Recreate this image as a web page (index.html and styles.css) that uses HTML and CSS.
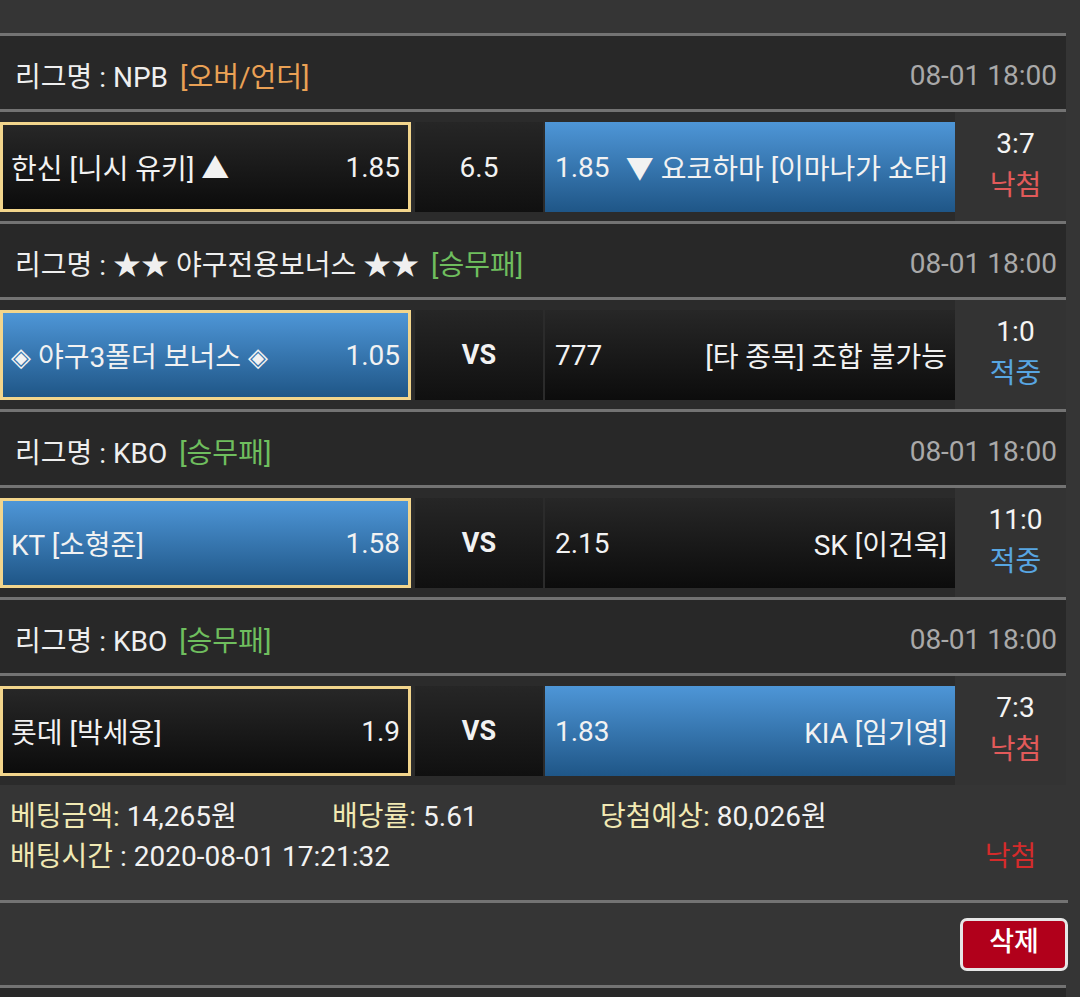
FILE: index.html
```html
<!DOCTYPE html>
<html lang="ko">
<head>
<meta charset="utf-8">
<title>베팅내역</title>
<link rel="stylesheet" href="styles.css">
</head>
<body>
<div class="page">
  <div class="top-space"></div>
  <div class="card">
    <div class="league">
      <div class="league-name">리그명 : NPB <span class="tag tag-ou">[오버/언더]</span></div>
      <div class="league-date">08-01 18:00</div>
    </div>
    <div class="game">
      <div class="pick dark selected"><span>한신 [니시 유키] ▲</span><span>1.85</span></div>
      <div class="mid">6.5</div>
      <div class="pick blue"><span>1.85</span><span>▼ 요코하마 [이마나가 쇼타]</span></div>
      <div class="result"><span class="score">3:7</span><span class="lose">낙첨</span></div>
    </div>

    <div class="league">
      <div class="league-name">리그명 : ★★ 야구전용보너스 ★★ <span class="tag tag-wdl">[승무패]</span></div>
      <div class="league-date">08-01 18:00</div>
    </div>
    <div class="game">
      <div class="pick blue selected"><span><span class="dia">◈</span> 야구3폴더 보너스 <span class="dia">◈</span></span><span>1.05</span></div>
      <div class="mid vs">VS</div>
      <div class="pick dark"><span>777</span><span>[타 종목] 조합 불가능</span></div>
      <div class="result"><span class="score">1:0</span><span class="win">적중</span></div>
    </div>

    <div class="league">
      <div class="league-name">리그명 : KBO <span class="tag tag-wdl">[승무패]</span></div>
      <div class="league-date">08-01 18:00</div>
    </div>
    <div class="game">
      <div class="pick blue selected"><span>KT [소형준]</span><span>1.58</span></div>
      <div class="mid vs">VS</div>
      <div class="pick dark"><span>2.15</span><span>SK [이건욱]</span></div>
      <div class="result"><span class="score">11:0</span><span class="win">적중</span></div>
    </div>

    <div class="league">
      <div class="league-name">리그명 : KBO <span class="tag tag-wdl">[승무패]</span></div>
      <div class="league-date">08-01 18:00</div>
    </div>
    <div class="game">
      <div class="pick dark selected"><span>롯데 [박세웅]</span><span>1.9</span></div>
      <div class="mid vs">VS</div>
      <div class="pick blue"><span>1.83</span><span>KIA [임기영]</span></div>
      <div class="result"><span class="score">7:3</span><span class="lose">낙첨</span></div>
    </div>

    <div class="info">
      <div class="info-row">
        <div class="info-item"><span class="label">베팅금액:</span> 14,265원</div>
        <div class="info-item"><span class="label">배당률:</span> 5.61</div>
        <div class="info-item"><span class="label">당첨예상:</span> 80,026원</div>
      </div>
      <div class="info-row info-row2">
        <div class="info-time"><span class="label">배팅시간</span> : 2020-08-01 17:21:32</div>
        <div class="info-status">낙첨</div>
      </div>
    </div>

    <div class="actions">
      <button class="btn-delete" type="button">삭제</button>
    </div>
    <div class="next-card"></div>
  </div>
</div>
</body>
</html>
```

FILE: styles.css
```css
html, body {
  margin: 0;
  padding: 0;
  background: #353535;
}

body {
  font-family: Roboto, "Noto Sans CJK KR", "DejaVu Sans", sans-serif;
  font-size: 28px;
  color: #f2f2f2;
}

.page {
  width: 1080px;
  height: 997px;
  overflow: hidden;
}

.top-space {
  height: 33px;
}

.card {
  width: 1066px;
}

.league {
  border-top: 3px solid #737373;
  background: #282828;
  display: flex;
  align-items: center;
  justify-content: space-between;
  padding: 5px 9px 0 15px;
  box-sizing: border-box;
  height: 76px;
}

.league-name {
  color: #efefef;
  white-space: nowrap;
}

.tag {
  margin-left: 5px;
}

.tag-ou {
  color: #eaa155;
}

.tag-wdl {
  color: #6fbe5e;
}

.league-date {
  color: #a9a9a9;
}

.game {
  border-top: 3px solid #737373;
  background: #2b2b2b;
  display: flex;
  height: 112px;
  box-sizing: border-box;
  padding-top: 10px;
  padding-bottom: 9px;
}

.pick {
  width: 411px;
  height: 90px;
  box-sizing: border-box;
  display: flex;
  align-items: center;
  justify-content: space-between;
  padding: 0 8px 0 10px;
  white-space: nowrap;
}

.pick + .mid + .pick {
  width: 410px;
  margin-left: 2px;
}

.dark {
  background: linear-gradient(#272727, #0c0c0c);
}

.blue {
  background: linear-gradient(#4e96d7, #1f5687);
}

.selected {
  border: 3px solid #f2d58c;
  padding: 0 8px 0 8px;
}

.dia {
  font-size: 26px;
  vertical-align: 1px;
}

.mid {
  width: 128px;
  height: 90px;
  margin-left: 4px;
  display: flex;
  align-items: center;
  justify-content: center;
  background: linear-gradient(#262626, #101010);
}

.mid.vs {
  font-weight: bold;
  font-size: 27px;
}

.result {
  flex: 1;
  margin-top: -10px;
  margin-bottom: -9px;
  background: #333333;
  display: flex;
  flex-direction: column;
  align-items: center;
  justify-content: center;
  padding-left: 10px;
  padding-bottom: 4px;
  line-height: 42px;
}

.score {
  color: #f4f4f4;
}

.lose {
  color: #e25a5a;
}

.win {
  color: #58a6e2;
}

.info {
  height: 115px;
  box-sizing: border-box;
  padding: 12px 0 0 10px;
  background: #353535;
}

.info-row {
  display: grid;
  grid-template-columns: 322px 268px 1fr;
  line-height: 40px;
}

.info-row2 {
  display: flex;
  justify-content: space-between;
}

.label {
  color: #f1e9b3;
}

.info-status {
  width: 111px;
  text-align: center;
  color: #d42b2b;
}

.actions {
  border-top: 3px solid #737373;
  height: 85px;
  box-sizing: border-box;
  display: flex;
  align-items: center;
  justify-content: flex-end;
  margin-right: -2px;
}

.btn-delete {
  width: 108px;
  height: 53px;
  border: 3px solid #e6e6e6;
  border-radius: 7px;
  background: #b1001b;
  color: #ffffff;
  font-family: Roboto, "Noto Sans CJK KR", sans-serif;
  font-size: 27px;
  font-weight: 500;
  line-height: 1;
  padding: 0 0 4px 0;
  margin-top: 1px;
}

.next-card {
  border-top: 3px solid #737373;
  background: #282828;
  height: 20px;
}
```
